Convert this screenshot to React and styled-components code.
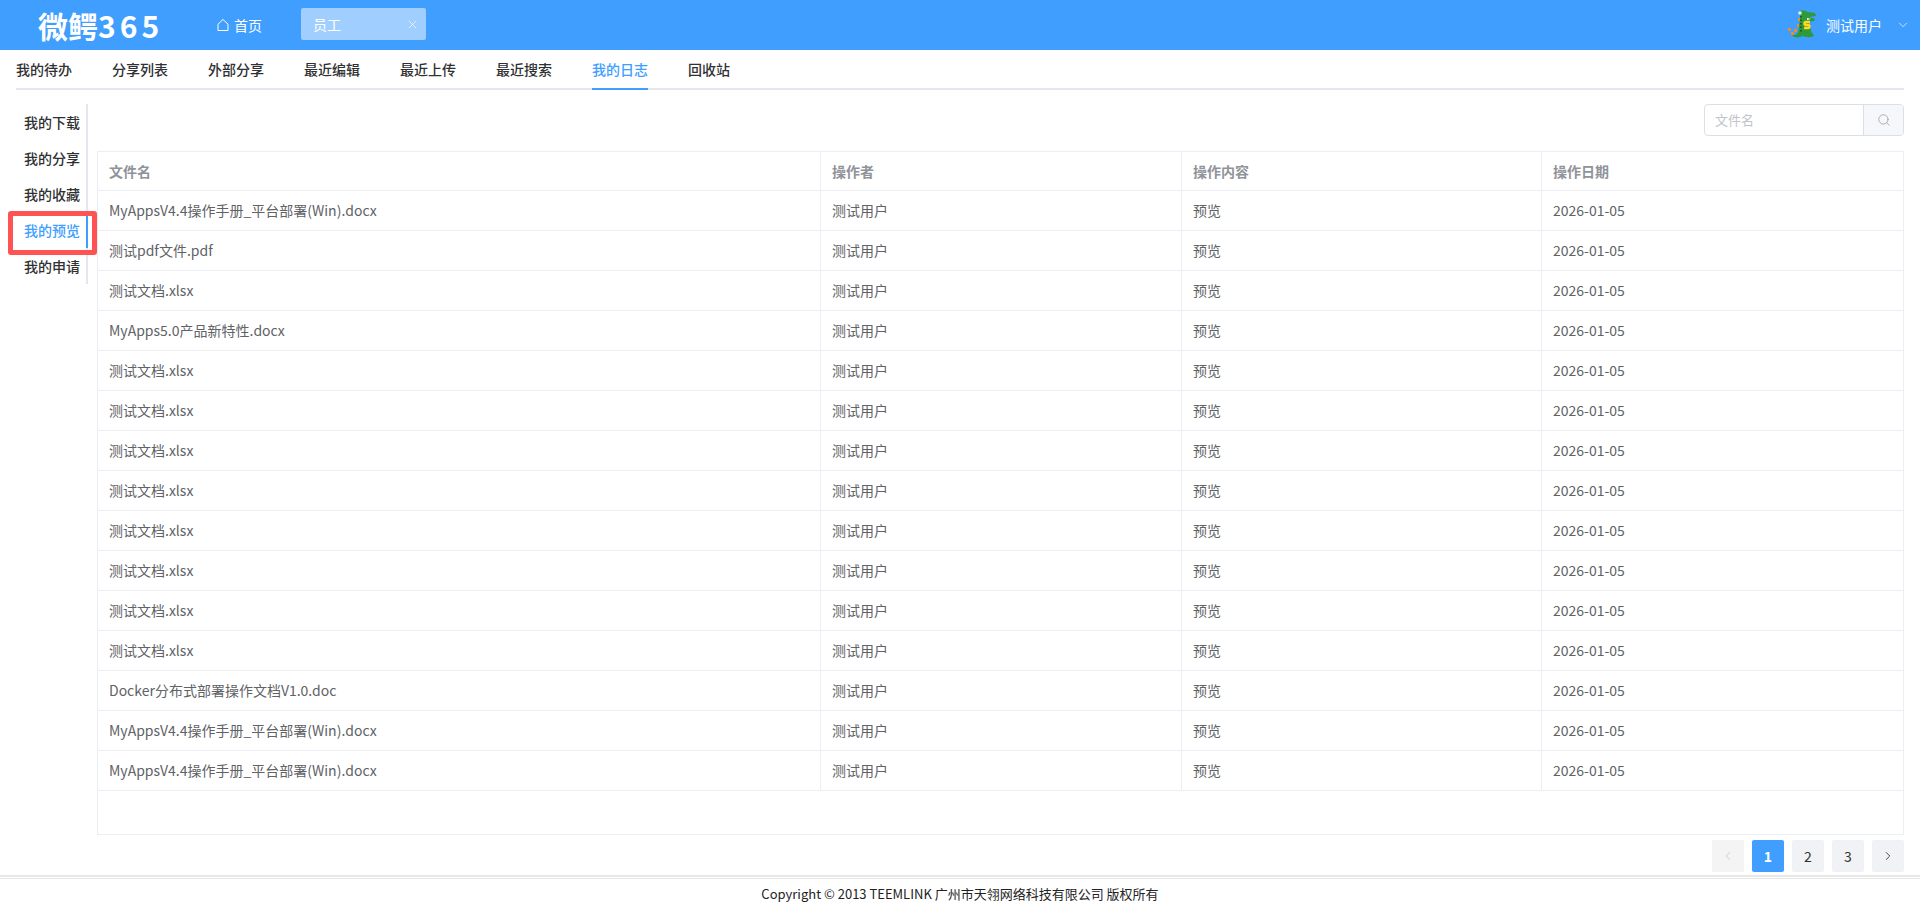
import React from 'react';
import styled, { createGlobalStyle } from 'styled-components';
import { X, ChevronDown, ChevronLeft, ChevronRight, Search } from 'lucide-react';

const GlobalStyle = createGlobalStyle`
	html, body {
		margin: 0;
		padding: 0;
		background: #fff;
		font-family: "Noto Sans CJK SC", "Noto Sans", sans-serif;
		font-size: 14px;
	}
	* {
		box-sizing: border-box;
	}
`;

const Page = styled.div`
	display: flex;
	flex-direction: column;
	width: 100%;
	height: 910px;
	overflow: hidden;
`;

const Header = styled.header`
	display: flex;
	align-items: center;
	flex: none;
	height: 50px;
	padding: 0 10px 0 38px;
	background: #409eff;
	color: #fff;
`;

const Logo = styled.div`
	width: 178px;
	font-size: 30px;
	font-weight: 700;
	line-height: 50px;
	white-space: nowrap;

	span {
		letter-spacing: 4px;
	}
`;

const HomeLink = styled.div`
	display: flex;
	align-items: center;
	gap: 4px;
	width: 85px;
	font-size: 14px;
`;

const OpenTab = styled.div`
	display: flex;
	align-items: center;
	justify-content: space-between;
	width: 125px;
	height: 32px;
	margin-top: -2px;
	padding: 0 7px 0 12px;
	border-radius: 2px;
	background: #a0cfff;
	font-size: 14px;
`;

const User = styled.div`
	display: flex;
	align-items: center;
	margin-left: auto;
	font-size: 14px;
`;

const UserName = styled.span`
	margin: 0 14px 0 9px;
`;

const NavBar = styled.nav`
	display: flex;
	flex: none;
	gap: 40px;
	height: 40px;
	margin: 0 16px;
	border-bottom: 2px solid #e4e7ed;
`;

const NavItem = styled.div`
	height: 40px;
	line-height: 39px;
	font-size: 14px;
	font-weight: 500;
	color: ${(p) => (p.$active ? '#409eff' : '#303133')};
	border-bottom: 2px solid ${(p) => (p.$active ? '#409eff' : 'transparent')};
`;

const Body = styled.div`
	display: flex;
	flex: none;
	height: 785px;
	padding: 14px 16px 0 16px;
`;

const Side = styled.aside`
	flex: none;
	width: 72px;
	height: 180px;
	border-right: 2px solid #e4e7ed;
`;

const SideItem = styled.div`
	position: relative;
	height: 36px;
	margin-right: -2px;
	padding-left: 8px;
	line-height: 36px;
	font-size: 14px;
	font-weight: 500;
	color: ${(p) => (p.$active ? '#409eff' : '#303133')};
	border-right: 2px solid ${(p) => (p.$active ? '#409eff' : 'transparent')};
`;

const Marker = styled.div`
	position: absolute;
	top: -1px;
	left: -8px;
	width: 89px;
	height: 44px;
	border: 5px solid #ff5252;
	border-radius: 3px;
`;

const Main = styled.main`
	display: flex;
	flex: 1;
	flex-direction: column;
	margin-left: 9px;
	min-width: 0;
`;

const SearchRow = styled.div`
	display: flex;
	justify-content: flex-end;
	height: 47px;
`;

const SearchBox = styled.div`
	display: flex;
	width: 200px;
	height: 32px;
	border: 1px solid #dcdfe6;
	border-radius: 4px;
	overflow: hidden;
`;

const SearchInput = styled.div`
	flex: 1;
	padding-left: 10px;
	line-height: 30px;
	font-size: 13px;
	color: #c0c4cc;
`;

const SearchButton = styled.div`
	display: flex;
	align-items: center;
	justify-content: center;
	width: 40px;
	border-left: 1px solid #dcdfe6;
	background: #f5f7fa;
	color: #909399;
`;

const Table = styled.div`
	flex: none;
	height: 684px;
	border: 1px solid #ebeef5;
`;

const Row = styled.div`
	display: grid;
	grid-template-columns: 723px 361px 360px 1fr;
	height: ${(p) => (p.$head ? '39px' : '40px')};
	border-bottom: 1px solid #ebeef5;
`;

const Cell = styled.div`
	padding-left: 11px;
	line-height: ${(p) => (p.$head ? '38px' : '39px')};
	font-size: 14px;
	font-weight: ${(p) => (p.$head ? 700 : 400)};
	color: ${(p) => (p.$head ? '#909399' : '#606266')};
	border-right: 1px solid #ebeef5;

	&:last-child {
		border-right: 0;
	}
`;

const Pager = styled.div`
	display: flex;
	justify-content: flex-end;
	gap: 8px;
	margin-top: 5px;
`;

const PageButton = styled.div`
	display: flex;
	align-items: center;
	justify-content: center;
	width: 32px;
	height: 32px;
	border-radius: 2px;
	font-size: 14px;
	font-weight: ${(p) => (p.$active ? 700 : 400)};
	background: ${(p) => (p.$active ? '#409eff' : p.$disabled ? '#f4f4f5' : '#f0f2f5')};
	color: ${(p) => (p.$active ? '#fff' : p.$disabled ? '#c0c4cc' : '#303133')};
`;

const Footer = styled.footer`
	flex: none;
	height: 35px;
	padding-top: 1px;
	border-top: 2px solid #e8e8e8;
	text-align: center;
	font-size: 13px;
	line-height: 30px;
	color: #222;

	&::before {
		display: block;
		height: 1px;
		margin-top: 0;
		background: #e8e8e8;
		content: '';
	}
`;

const HomeIcon = () => (
	<svg width="14" height="14" viewBox="0 0 14 14" fill="none" stroke="#fff" strokeWidth="1">
		<path d="M2 6.2 7 1.5l5 4.7v6.3H2z" />
	</svg>
);

const Dino = () => (
	<svg width="30" height="30" viewBox="0 0 30 30">
		<path d="M13 1c3-1 6 0 8 1l7 1 1 3-7 1 6 2-1 2-6 1c2 3 3 6 3 9l3 5c-4 2-9 1-11 0-4 2-9 2-11-1l3 0c3-1 4-4 4-9l1-8z" fill="#2e9a3a" />
		<path d="M20 8l4 1-4 1z" fill="#fff" />
		<path d="M23 12h-4c-2 0-2 3 0 3h2c2 0 2 3 0 3h-4" fill="none" stroke="#ffd81f" strokeWidth="2.4" />
		<path d="M14 6v16" stroke="#17451d" strokeWidth="1.4" strokeDasharray="1.5 2" />
		<path d="M11 8h2v3h-2zM10 14h2v3h-2zM7 19h3v3H7zM1 18h3v3H1zM4 22h3v3H4z" fill="#f08a24" />
		<circle cx="13" cy="3" r="1.8" fill="#dff2e0" />
	</svg>
);

const navItems = ['我的待办', '分享列表', '外部分享', '最近编辑', '最近上传', '最近搜索', '我的日志', '回收站'];
const sideItems = ['我的下载', '我的分享', '我的收藏', '我的预览', '我的申请'];
const manual = 'MyAppsV4.4操作手册_平台部署(Win).docx';
const xlsx = '测试文档.xlsx';
const files = [
	manual,
	'测试pdf文件.pdf',
	xlsx,
	'MyApps5.0产品新特性.docx',
	xlsx,
	xlsx,
	xlsx,
	xlsx,
	xlsx,
	xlsx,
	xlsx,
	xlsx,
	'Docker分布式部署操作文档V1.0.doc',
	manual,
	manual,
];

const App = () => (
	<Page>
		<GlobalStyle />
		<Header>
			<Logo>
				微鳄<span>365</span>
			</Logo>
			<HomeLink>
				<HomeIcon />
				首页
			</HomeLink>
			<OpenTab>
				员工
				<X size={13} strokeWidth={1.2} />
			</OpenTab>
			<User>
				<Dino />
				<UserName>测试用户</UserName>
				<ChevronDown size={14} strokeWidth={1.2} />
			</User>
		</Header>
		<NavBar>
			{navItems.map((item) => (
				<NavItem key={item} $active={item === '我的日志'}>
					{item}
				</NavItem>
			))}
		</NavBar>
		<Body>
			<Side>
				{sideItems.map((item) => (
					<SideItem key={item} $active={item === '我的预览'}>
						{item}
						{item === '我的预览' && <Marker />}
					</SideItem>
				))}
			</Side>
			<Main>
				<SearchRow>
					<SearchBox>
						<SearchInput>文件名</SearchInput>
						<SearchButton>
							<Search size={14} strokeWidth={1.2} />
						</SearchButton>
					</SearchBox>
				</SearchRow>
				<Table>
					<Row $head>
						<Cell $head>文件名</Cell>
						<Cell $head>操作者</Cell>
						<Cell $head>操作内容</Cell>
						<Cell $head>操作日期</Cell>
					</Row>
					{files.map((file, i) => (
						<Row key={i}>
							<Cell>{file}</Cell>
							<Cell>测试用户</Cell>
							<Cell>预览</Cell>
							<Cell>2026-01-05</Cell>
						</Row>
					))}
				</Table>
				<Pager>
					<PageButton $disabled>
						<ChevronLeft size={14} strokeWidth={1.5} />
					</PageButton>
					<PageButton $active>1</PageButton>
					<PageButton>2</PageButton>
					<PageButton>3</PageButton>
					<PageButton>
						<ChevronRight size={14} strokeWidth={1.5} />
					</PageButton>
				</Pager>
			</Main>
		</Body>
		<Footer>Copyright © 2013 TEEMLINK 广州市天翎网络科技有限公司 版权所有</Footer>
	</Page>
);

export default App;
